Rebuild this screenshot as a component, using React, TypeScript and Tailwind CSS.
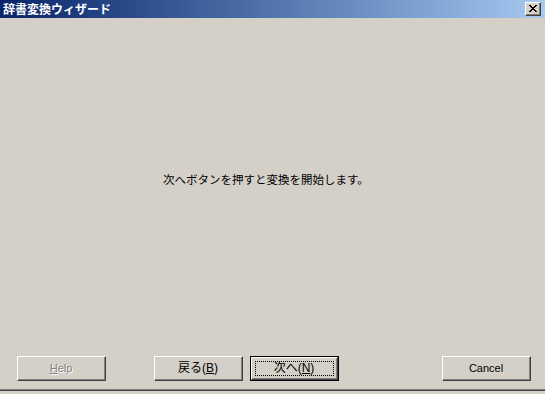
import React from "react";

const font = { fontFamily: '"Liberation Sans", "Noto Sans CJK JP", sans-serif' };

function Btn({
  children,
  isDefault = false,
}: {
  children: React.ReactNode;
  isDefault?: boolean;
}) {
  const bevel = (
    <div className="flex-1 flex border-t border-l border-t-white border-l-white border-b border-r border-b-[#404040] border-r-[#404040]">
      <div className="flex-1 flex items-center justify-center border-b border-r border-b-[#808080] border-r-[#808080]">
        {isDefault ? (
          <div className="w-[79px] h-[15px] border border-dotted border-black flex items-center justify-center">
            {children}
          </div>
        ) : (
          children
        )}
      </div>
    </div>
  );
  if (isDefault) {
    return (
      <div className="w-[89px] h-[25px] flex border border-black bg-[#d4d0c8]">{bevel}</div>
    );
  }
  return <div className="w-[89px] h-[25px] flex bg-[#d4d0c8]">{bevel}</div>;
}

const xRows = ["XX....XX", ".XX..XX.", "..XXXX..", "...XX...", "..XXXX..", ".XX..XX.", "XX....XX"];

export default function App() {
  return (
    <div
      className="w-[545px] h-[394px] bg-[#d4d0c8] flex flex-col text-black overflow-hidden"
      style={font}
    >
      {/* Title bar */}
      <div className="h-[18px] flex items-center bg-gradient-to-r from-[#0a246a] to-[#a6caf0] pl-[3px] pr-[4px]">
        <span
          className="text-white font-bold text-[12px] leading-[18px] flex-1"
          style={{ fontFamily: '"Noto Sans CJK JP", sans-serif' }}
        >
          辞書変換ウィザード
        </span>
        <div className="w-[16px] h-[14px] flex border-t border-l border-t-white border-l-white border-b border-r border-b-[#404040] border-r-[#404040] bg-[#d4d0c8]">
          <div className="flex-1 flex items-center justify-center border-b border-r border-b-[#808080] border-r-[#808080]">
            <svg width="8" height="7" viewBox="0 0 8 7" shapeRendering="crispEdges">
              {xRows.map((row, y) =>
                row.split("").map((c, x) =>
                  c === "X" ? <rect key={`${x}-${y}`} x={x} y={y} width="1" height="1" fill="black" /> : null
                )
              )}
            </svg>
          </div>
        </div>
      </div>

      {/* Content */}
      <div className="h-[338px] pt-[153px] pl-[163px] flex">
        <span
          className="text-[11.5px] leading-[16px] h-[16px]"
          style={{ fontFamily: '"Noto Sans CJK JP", sans-serif' }}
        >
          次へボタンを押すと変換を開始します。
        </span>
      </div>

      {/* Buttons */}
      <div className="h-[25px] flex pl-[17px]">
        <Btn>
          <span
            className="text-[11px] text-[#808080]"
            style={{ textShadow: "1px 1px 0 #ffffff" }}
          >
            <span className="underline">H</span>elp
          </span>
        </Btn>
        <div className="w-[48px]" />
        <Btn>
          <span className="text-[12px]">
            戻る(<span className="underline">B</span>)
          </span>
        </Btn>
        <div className="w-[7px]" />
        <Btn isDefault>
          <span className="text-[12px]">
            次へ(<span className="underline">N</span>)
          </span>
        </Btn>
        <div className="w-[103px]" />
        <Btn>
          <span className="text-[11px]">Cancel</span>
        </Btn>
      </div>

      <div className="h-[8px]" />
      <div className="h-[1px] bg-[#808080]" />
      <div className="h-[1px] bg-[#404040]" />
    </div>
  );
}
